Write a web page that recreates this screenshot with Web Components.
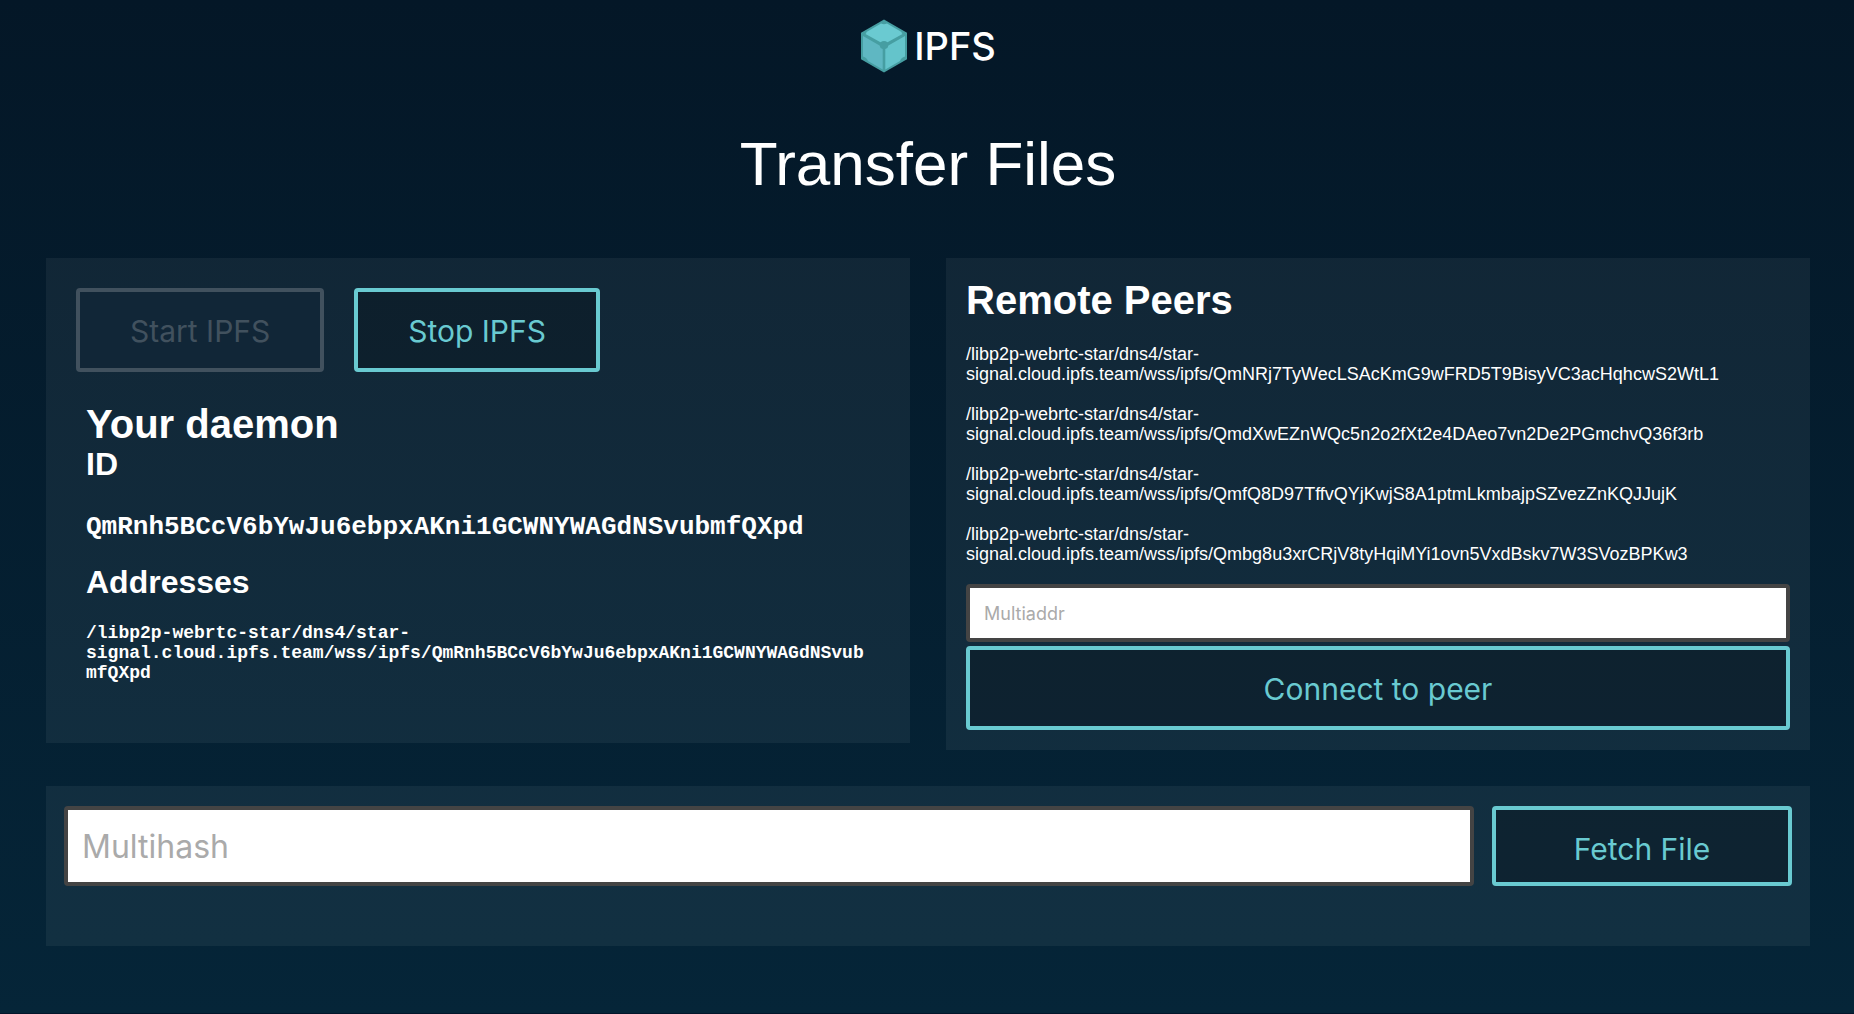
<!DOCTYPE html>
<html lang="en">
<head>
<meta charset="utf-8">
<title>Transfer Files</title>
<style>
  html { min-height: 100%; background: #041727; }
  body {
    margin: 0;
    color: #fff;
    font-family: "Liberation Sans", Helvetica, Arial, sans-serif;
    --aqua: #69cad1;
    --ui-font: Inter, "Helvetica Neue", sans-serif;
  }
</style>
</head>
<body>
<transfer-app></transfer-app>

<script>
const define = (name, html, setup) => {
  const template = document.createElement('template');
  template.innerHTML = html;
  customElements.define(name, class extends HTMLElement {
    constructor() {
      super();
      this.attachShadow({ mode: 'open' }).append(template.content.cloneNode(true));
    }
    connectedCallback() {
      if (setup) setup(this, this.shadowRoot);
    }
  });
};

define('ipfs-logo', `
  <style>
    :host { display: flex; align-items: center; justify-content: center; gap: 6px; height: 56px; }
    svg { width: 48px; height: 54px; }
    span { font: 500 38px/56px var(--ui-font); }
  </style>
  <svg viewBox="0 0 48 54" aria-hidden="true">
    <path fill="#469ea2" d="M24 0.5 47 13.7v26.6L24 53.5 1 40.3V13.7z"/>
    <path fill="#6acad1" d="M21 4.600Q24 6 27 4.600L41.500 13Q41.500 14.500 42.500 15L27.500 23.300Q24 20.500 20.500 23.300L5.500 15Q6.500 14.500 6.500 13z"/>
    <path fill="#5fb7c2" d="M3 17 19.600 26.400Q20 29.500 22.700 30V50.500L8 42Q7 38.500 3 37.500z"/>
    <path fill="#64c4cb" d="M45 17 28.400 26.400Q28 29.500 25.300 30V50.500L40 42Q41 38.500 45 37.500z"/>
  </svg>
  <span>IPFS</span>`);

define('page-header', `
  <style>
    :host { display: block; padding: 18px 0 56px; text-align: center; }
    h1 { margin: 52px 0 0; font-weight: 400; font-size: 62px; line-height: 76px; }
  </style>
  <ipfs-logo></ipfs-logo>
  <h1><slot></slot></h1>`);

define('ui-button', `
  <style>
    :host { display: block; }
    button {
      box-sizing: border-box;
      width: 100%;
      height: var(--button-height, 84px);
      padding: var(--button-drop, 2px) 50px 0;
      border: 4px solid var(--aqua);
      border-radius: 4px;
      background: rgba(9, 24, 34, .5) padding-box;
      color: var(--aqua);
      font: 400 30px/36px var(--ui-font);
      white-space: nowrap;
    }
    button:disabled { border-color: #41515e; background: #112637; color: #41515e; }
  </style>
  <button type="button"><slot></slot></button>`,
  (host, root) => { root.querySelector('button').disabled = host.hasAttribute('disabled'); });

define('ui-field', `
  <style>
    :host { display: block; }
    input {
      display: block;
      box-sizing: border-box;
      width: 100%;
      height: var(--field-height, 58px);
      padding: 0 14px;
      border: 4px solid #444;
      border-radius: 4px;
      background: #fff;
      color: #444;
      font: 400 var(--field-size, 18px) var(--ui-font);
    }
    input::placeholder { color: #aaa; opacity: 1; }
  </style>
  <input type="text">`,
  (host, root) => {
    const input = root.querySelector('input');
    input.placeholder = host.getAttribute('label');
    input.setAttribute('aria-label', host.getAttribute('label'));
  });

define('ui-panel', `
  <style>
    :host { display: block; background: rgba(255, 255, 255, .055); }
  </style>
  <slot></slot>`);

define('daemon-panel', `
  <style>
    :host { display: block; }
    ui-panel { padding: 30px 30px 60px; }
    .actions { display: flex; gap: 30px; }
    .details { padding: 30px 10px 0; }
    h2 { margin: 0; font-size: 40px; line-height: 44px; }
    h3 { margin: 0; font-size: 32px; line-height: 36px; }
    p { font-family: "Liberation Mono", "Courier New", monospace; font-weight: 700; overflow-wrap: anywhere; }
    .id { margin: 30px 0 22px; font-size: 26px; line-height: 30px; }
    .address { margin: 23px 0 0; font-size: 18px; line-height: 20px; }
  </style>
  <ui-panel>
    <div class="actions">
      <ui-button disabled>Start IPFS</ui-button>
      <ui-button>Stop IPFS</ui-button>
    </div>
    <div class="details">
      <h2>Your daemon</h2>
      <h3>ID</h3>
      <p class="id">QmRnh5BCcV6bYwJu6ebpxAKni1GCWNYWAGdNSvubmfQXpd</p>
      <h3>Addresses</h3>
      <p class="address">/libp2p-webrtc-star/dns4/star-signal.cloud.ipfs.team/wss/ipfs/QmRnh5BCcV6bYwJu6ebpxAKni1GCWNYWAGdNSvubmfQXpd</p>
    </div>
  </ui-panel>`);

define('peers-panel', `
  <style>
    :host { display: block; }
    ui-panel { padding: 20px; }
    h2 { margin: 0 0 22px; font-size: 40px; line-height: 44px; }
    ul { margin: 0 0 20px; padding: 0; list-style: none; display: grid; gap: 20px; }
    li { font-size: 18px; line-height: 20px; overflow-wrap: anywhere; }
    .form { display: grid; gap: 4px; }
  </style>
  <ui-panel>
    <h2>Remote Peers</h2>
    <ul>
      <li>/libp2p-webrtc-star/dns4/star-<wbr>signal.cloud.ipfs.team/wss/ipfs/QmNRj7TyWecLSAcKmG9wFRD5T9BisyVC3acHqhcwS2WtL1</li>
      <li>/libp2p-webrtc-star/dns4/star-<wbr>signal.cloud.ipfs.team/wss/ipfs/QmdXwEZnWQc5n2o2fXt2e4DAeo7vn2De2PGmchvQ36f3rb</li>
      <li>/libp2p-webrtc-star/dns4/star-<wbr>signal.cloud.ipfs.team/wss/ipfs/QmfQ8D97TffvQYjKwjS8A1ptmLkmbajpSZvezZnKQJJujK</li>
      <li>/libp2p-webrtc-star/dns/star-<wbr>signal.cloud.ipfs.team/wss/ipfs/Qmbg8u3xrCRjV8tyHqiMYi1ovn5VxdBskv7W3SVozBPKw3</li>
    </ul>
    <div class="form">
      <ui-field label="Multiaddr"></ui-field>
      <ui-button>Connect to peer</ui-button>
    </div>
  </ui-panel>`);

define('fetch-panel', `
  <style>
    :host { display: block; --field-height: 80px; --field-size: 32px; --button-height: 80px; --button-drop: 6px; }
    ui-panel { display: grid; grid-template-columns: 1fr 300px; gap: 18px; padding: 20px 18px 60px; }
  </style>
  <ui-panel>
    <ui-field label="Multihash"></ui-field>
    <ui-button>Fetch File</ui-button>
  </ui-panel>`);

define('transfer-app', `
  <style>
    :host {
      display: block;
      box-sizing: border-box;
      min-height: 100vh;
      padding: 0 44px 0 46px;
      border-bottom: 1px solid #03152a;
      background: linear-gradient(#041727, #052538);
    }
    main { display: grid; gap: 36px; }
    .columns { display: grid; grid-template-columns: 1fr 1fr; gap: 36px; align-items: start; }
  </style>
  <page-header>Transfer Files</page-header>
  <main>
    <div class="columns">
      <daemon-panel></daemon-panel>
      <peers-panel></peers-panel>
    </div>
    <fetch-panel></fetch-panel>
  </main>`);
</script>
</body>
</html>
